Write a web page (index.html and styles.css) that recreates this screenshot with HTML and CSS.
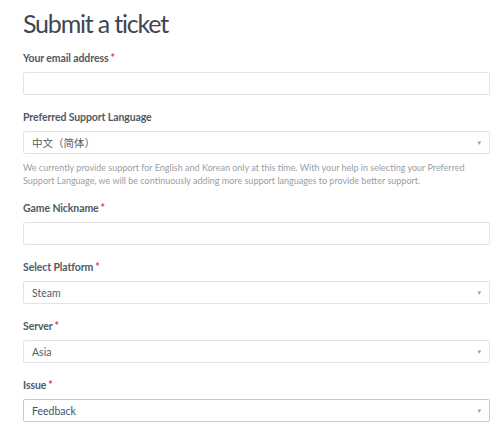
FILE: index.html
```html
<!DOCTYPE html>
<html>
<head>
<meta charset="utf-8">
<link rel="stylesheet" href="styles.css">
</head>
<body>
<div class="page">
  <h1 class="title">Submit a ticket</h1>
  <div class="field">
    <div class="label">Your email address<span class="req">*</span></div>
    <div class="input"></div>
  </div>
  <div class="field field-help">
    <div class="label">Preferred Support Language</div>
    <div class="input select"><span class="value">中文（简体）</span><span class="arrow">▾</span></div>
    <p class="help">We currently provide support for English and Korean only at this time. With your help in selecting your Preferred Support Language, we will be continuously adding more support languages to provide better support.</p>
  </div>
  <div class="field">
    <div class="label">Game Nickname<span class="req">*</span></div>
    <div class="input"></div>
  </div>
  <div class="field">
    <div class="label">Select Platform<span class="req">*</span></div>
    <div class="input select"><span class="value">Steam</span><span class="arrow">▾</span></div>
  </div>
  <div class="field">
    <div class="label">Server<span class="req">*</span></div>
    <div class="input select"><span class="value">Asia</span><span class="arrow">▾</span></div>
  </div>
  <div class="field">
    <div class="label">Issue<span class="req">*</span></div>
    <div class="input select focus"><span class="value value-dark">Feedback</span><span class="arrow">▾</span></div>
  </div>
</div>
</body>
</html>
```
FILE: styles.css
```css
html, body {
  margin: 0;
  padding: 0;
  background: #ffffff;
}
.page {
  width: 467px;
  padding-left: 23px;
  font-family: "Lato", "Noto Sans CJK SC", sans-serif;
}
.title {
  margin: 0;
  padding-top: 6px;
  height: 44px;
  font-size: 25px;
  line-height: 34px;
  font-weight: 400;
  letter-spacing: -1.2px;
  color: #3f4652;
}
.field {
  margin-bottom: 14px;
}
.label {
  font-size: 10.5px;
  line-height: 16px;
  font-weight: 700;
  letter-spacing: -0.1px;
  color: #4f5a66;
  margin-bottom: 6px;
}
.req {
  color: #d64545;
  margin-left: 2px;
}
.input {
  box-sizing: border-box;
  height: 23px;
  border: 1px solid #e2e4e6;
  border-radius: 2px;
  display: flex;
  align-items: center;
  padding: 0 8px;
}
.select {
  justify-content: space-between;
}
.value {
  font-size: 10.5px;
  color: #555c63;
  font-family: "Lato", "Noto Sans CJK SC", sans-serif;
}
.value-dark {
  color: #3c5168;
}
.arrow {
  font-size: 7px;
  color: #9aa0a6;
  font-family: "DejaVu Sans", sans-serif;
}
.focus {
  border-color: #a9d3e8;
}
.help {
  margin: 7px 0 0 0;
  font-size: 9px;
  line-height: 13px;
  color: #9a9ea3;
}
.field-help {
  margin-bottom: 13px;
}
```
